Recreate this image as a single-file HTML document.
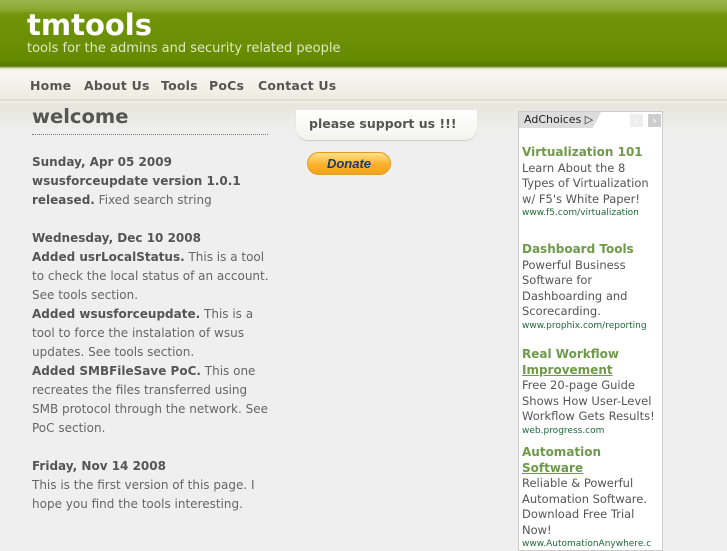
<!DOCTYPE html>
<html><head><meta charset="utf-8"><style>
*{margin:0;padding:0;box-sizing:border-box}
body{width:727px;height:545px;overflow:hidden;background:#efefef;font-family:"DejaVu Sans","Liberation Sans",sans-serif;color:#666;position:relative}
#hdr{position:absolute;left:0;top:0;width:727px;height:70px;background:linear-gradient(#9ab64a 0,#8aa830 10px,#72960a 14px,#658a00 60px,#557800 66px,#c8d6a0 68px,#ffffff 70px)}
#hdr h1{position:absolute;left:27px;top:8px;font-size:29px;font-weight:bold;color:#fff}
#hdr p{position:absolute;left:27px;top:41px;font-size:13px;color:#dfe8c0}
#nav{position:absolute;left:0;top:71px;width:727px;height:30px;background:linear-gradient(#f8f8f2,#ecece2);border-bottom:2px solid #dcdcc8}
#nav span{position:absolute;top:7px;font-size:12.5px;font-weight:bold;color:#555;letter-spacing:0.2px}
#band{position:absolute;left:0;top:103px;width:727px;height:30px;background:linear-gradient(#e6e6dc,#efefef)}
#left{position:absolute;left:32px;top:107px;width:240px;font-size:12px;line-height:19px}
#left h2{font-size:19.5px;color:#555;font-weight:bold;height:28px;border-bottom:1px dotted #777;width:236px;margin-bottom:18px}
#left b{color:#555}
#sup{position:absolute;left:296px;top:110px;width:181px;height:30px;background:linear-gradient(#fff,#f3f3ee);border-bottom-left-radius:12px;border-bottom-right-radius:12px;box-shadow:0 1px 1px #ccc;font-size:12.5px;font-weight:bold;color:#555;padding:6px 0 0 13px}
#don{position:absolute;left:307px;top:152px;width:84px;height:23px;border-radius:12px;background:linear-gradient(#ffe28a,#fbb12a 55%,#f7a21a);border:1px solid #e59a20;font:italic bold 13px "Liberation Sans",sans-serif;color:#1a3a6a;text-align:center;line-height:21px}
#ad{position:absolute;left:518px;top:111px;width:145px;height:440px;background:#fff;border:1px solid #ccc}
#ac{position:absolute;left:0;top:0;width:74px;height:16px;background:#ddd;font:11px "DejaVu Sans",sans-serif;color:#222;padding:1px 0 0 5px;white-space:nowrap}
#ac:after{content:"";position:absolute;right:-8px;top:0;border-left:8px solid #ddd;border-bottom:16px solid transparent}
.ar{position:absolute;top:2px;width:13px;height:13px;background:#eee;color:#fff;font-size:11px;text-align:center;line-height:13px}
.ads{position:absolute;left:3px;font-size:11.5px;line-height:15.5px;color:#555;width:137px}
.ads b{color:#6f9a4a;font-size:12px}
.ads u{color:#6f9a4a;font-weight:bold;font-size:12px}
.ads i{display:block;font-style:normal;font-size:9px;line-height:12px;color:#1f6a3a;white-space:nowrap}
</style></head><body>
<div id="hdr"><h1>tmtools</h1><p>tools for the admins and security related people</p></div>
<div id="nav"><span style="left:30px">Home</span><span style="left:84px">About Us</span><span style="left:161px">Tools</span><span style="left:209px">PoCs</span><span style="left:258px">Contact Us</span></div>
<div id="band"></div>
<div id="left"><h2>welcome</h2>
<b>Sunday, Apr 05 2009</b><br><b>wsusforceupdate version 1.0.1 released.</b> Fixed search string<br><br>
<b>Wednesday, Dec 10 2008</b><br><b>Added usrLocalStatus.</b> This is a tool to check the local status of an account. See tools section.<br>
<b>Added wsusforceupdate.</b> This is a tool to force the instalation of wsus updates. See tools section.<br>
<b>Added SMBFileSave PoC.</b> This one recreates the files transferred using SMB protocol through the network. See PoC section.<br><br>
<b>Friday, Nov 14 2008</b><br>This is the first version of this page. I hope you find the tools interesting.</div>
<div id="sup">please support us !!!</div>
<div id="don">Donate</div>
<div id="ad"><div id="ac">AdChoices ▷</div>
<div class="ar" style="left:111px">‹</div><div class="ar" style="left:129px;background:#ccc">›</div>
<div class="ads" style="top:33px"><b>Virtualization 101</b><br>Learn About the 8<br>Types of Virtualization w/ F5's White Paper!<i>www.f5.com/virtualization</i></div>
<div class="ads" style="top:130px"><b>Dashboard Tools</b><br>Powerful Business Software for Dashboarding and Scorecarding.<i>www.prophix.com/reporting</i></div>
<div class="ads" style="top:235px"><b>Real Workflow</b><br><u>Improvement</u><br>Free 20-page Guide<br>Shows How User-Level<br>Workflow Gets Results!<i>web.progress.com</i></div>
<div class="ads" style="top:333px"><b>Automation</b><br><u>Software</u><br>Reliable &amp; Powerful Automation Software. Download Free Trial Now!<i>www.AutomationAnywhere.c</i></div>
</div>
</body></html>
